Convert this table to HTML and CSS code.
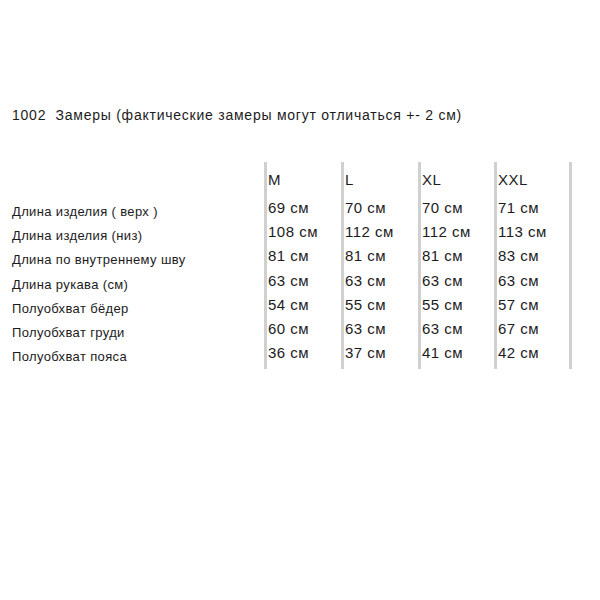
FILE: index.html
```html
<!DOCTYPE html>
<html lang="ru">
<head>
<meta charset="utf-8">
<title>Замеры</title>
<link rel="stylesheet" href="styles.css">
</head>
<body>
<div class="page">
  <p class="title">1002&nbsp; Замеры (фактические замеры могут отличаться +- 2 см)</p>
  <div class="table">
    <div class="labels">
      <div class="lab">Длина изделия ( верх )</div>
      <div class="lab">Длина изделия (низ)</div>
      <div class="lab">Длина по внутреннему шву</div>
      <div class="lab">Длина рукава (см)</div>
      <div class="lab">Полуобхват бёдер</div>
      <div class="lab">Полуобхват груди</div>
      <div class="lab">Полуобхват пояса</div>
    </div>
    <div class="col">
      <div class="head">M</div>
      <div class="vals">
        <div>69 см</div><div>108 см</div><div>81 см</div><div>63 см</div><div>54 см</div><div>60 см</div><div>36 см</div>
      </div>
    </div>
    <div class="col">
      <div class="head">L</div>
      <div class="vals">
        <div>70 см</div><div>112 см</div><div>81 см</div><div>63 см</div><div>55 см</div><div>63 см</div><div>37 см</div>
      </div>
    </div>
    <div class="col">
      <div class="head">XL</div>
      <div class="vals">
        <div>70 см</div><div>112 см</div><div>81 см</div><div>63 см</div><div>55 см</div><div>63 см</div><div>41 см</div>
      </div>
    </div>
    <div class="col">
      <div class="head">XXL</div>
      <div class="vals">
        <div>71 см</div><div>113 см</div><div>83 см</div><div>63 см</div><div>57 см</div><div>67 см</div><div>42 см</div>
      </div>
    </div>
    <div class="col end"></div>
  </div>
</div>
</body>
</html>
```
FILE: styles.css
```css
html, body {
  margin: 0;
  padding: 0;
  background: #ffffff;
}
body {
  font-family: "Liberation Sans", Arial, sans-serif;
  color: #1c1c1c;
}
.page {
  width: 600px;
  height: 600px;
  padding-top: 105px;
  box-sizing: border-box;
}
.title {
  margin: 0 0 0 12px;
  font-size: 14px;
  line-height: 20px;
  letter-spacing: 0.76px;
  white-space: nowrap;
}
.table {
  margin-top: 37px;
  display: grid;
  grid-template-columns: 264px 77px 77px 76px 75px 3px;
  height: 206px;
}
.labels {
  padding-left: 12px;
  padding-top: 38px;
  font-size: 13px;
  line-height: 24.2px;
  letter-spacing: 0.36px;
  white-space: nowrap;
}
.col {
  border-left: 3px solid #d0d0d0;
  padding-left: 1px;
  padding-top: 6px;
  font-size: 15px;
  line-height: 24px;
  letter-spacing: 0.5px;
  white-space: nowrap;
}
.col.end {
  padding: 0;
}
.head {
  line-height: 24px;
}
.vals {
  margin-top: 4px;
  line-height: 24.2px;
}
```
